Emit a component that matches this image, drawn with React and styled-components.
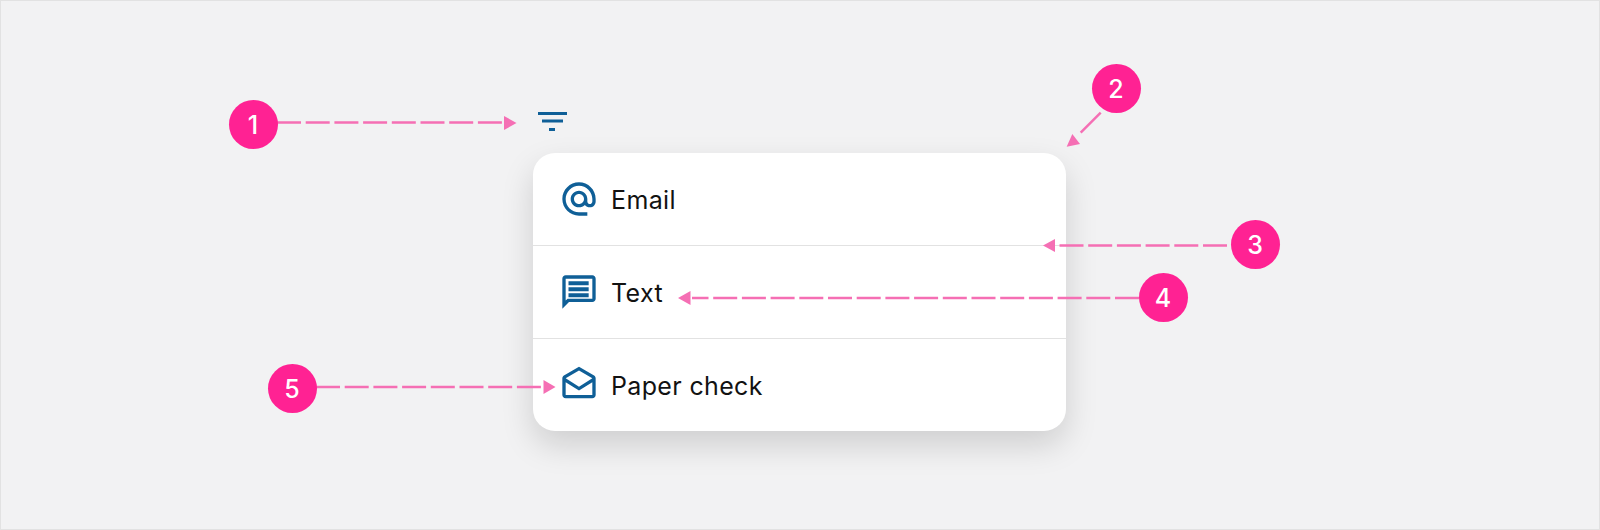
import React from "react"
import styled, { createGlobalStyle } from "styled-components"

const GlobalStyle = createGlobalStyle`
  html, body {
    margin: 0;
    padding: 0;
    background: #f2f2f3;
    font-family: "Inter", "Liberation Sans", sans-serif;
  }
`

const Stage = styled.div`
  position: relative;
  box-sizing: border-box;
  width: 1600px;
  height: 530px;
  padding: 109px 0 0 532px;
  background: #f2f2f3;
  border: 1px solid #e2e2e2;
  overflow: hidden;
`
const Column = styled.div`
  display: flex;
  flex-direction: column;
  align-items: flex-start;
  gap: 21px;
  width: 533px;
`
const FilterIcon = styled.svg`
  display: block;
  width: 32px;
  height: 22px;
  margin-left: 3px;
  color: #0f5f97;
`
const Card = styled.div`
  display: flex;
  flex-direction: column;
  align-self: stretch;
  background: #ffffff;
  border-radius: 22px;
  box-shadow: 0 14px 32px rgba(0, 0, 0, 0.15);
`
const Row = styled.div`
  box-sizing: border-box;
  display: flex;
  align-items: center;
  gap: 12px;
  height: 93px;
  padding-left: 26px;
  border-bottom: 1px solid #e2e2e2;
  &:last-child {
    height: 92px;
    border-bottom: 0;
  }
`
const Icon = styled.svg`
  flex-shrink: 0;
  width: 40px;
  height: 40px;
  fill: #0f5f97;
`
const Label = styled.span`
  padding-top: 2px;
  font-size: 25px;
  line-height: 32px;
  letter-spacing: 0.35px;
  color: #121212;
`
const Arrows = styled.svg`
  position: absolute;
  left: -1px;
  top: -1px;
  pointer-events: none;
`
const Badge = styled.div`
  position: absolute;
  box-sizing: border-box;
  left: ${props => props.x - 25.5}px;
  top: ${props => props.y - 25.5}px;
  width: 49px;
  height: 49px;
  padding-top: 1px;
  display: flex;
  align-items: center;
  justify-content: center;
  border-radius: 50%;
  background: #ff2293;
  color: #ffffff;
  font-size: 25px;
  font-weight: 500;
`

const arrowColor = "#f56fb4"

const lines = [
  { x1: 277, y1: 122.5, x2: 503, y2: 122.5, dash: "24 4.7" },
  { x1: 1227, y1: 245.5, x2: 1056, y2: 245.5, dash: "24 4.7" },
  { x1: 1139, y1: 298, x2: 692, y2: 298, dash: "24 4.7" },
  { x1: 316, y1: 387, x2: 542, y2: 387, dash: "24 4.7" },
  { x1: 1100.7, y1: 112.7, x2: 1080.7, y2: 132.7 },
]

const heads = [
  "504,116 504,130 516.5,123",
  "1055,239 1055,252 1043,245.5",
  "690.5,291 690.5,305 678,298",
  "543.5,380 543.5,394 555.5,387",
  "1066.7,146.7 1072.3,134 1080,144",
]

const badges = [
  { n: 1, x: 253, y: 124 },
  { n: 2, x: 1116, y: 88 },
  { n: 3, x: 1255, y: 244 },
  { n: 4, x: 1163, y: 297 },
  { n: 5, x: 292, y: 388 },
]

const App = () => (
  <Stage>
    <GlobalStyle />
    <Column>
      <FilterIcon viewBox="0 0 32 22" fill="currentColor">
        <rect x="2" y="2" width="29" height="3" />
        <rect x="6" y="9.5" width="21" height="3" />
        <rect x="13" y="18" width="6" height="3" />
      </FilterIcon>
      <Card>
        <Row>
          <Icon viewBox="0 0 24 24">
            <path d="M12 2C6.48 2 2 6.48 2 12s4.48 10 10 10h5v-2h-5c-4.34 0-8-3.66-8-8s3.66-8 8-8 8 3.66 8 8v1.43c0 .79-.71 1.57-1.5 1.57s-1.5-.78-1.5-1.57V12c0-2.76-2.24-5-5-5s-5 2.24-5 5 2.24 5 5 5c1.38 0 2.64-.56 3.54-1.47.65.89 1.77 1.47 2.96 1.47 1.97 0 3.5-1.6 3.5-3.57V12c0-5.52-4.48-10-10-10zm0 13c-1.66 0-3-1.34-3-3s1.34-3 3-3 3 1.34 3 3-1.34 3-3 3z" />
          </Icon>
          <Label>Email</Label>
        </Row>
        <Row>
          <Icon viewBox="0 0 24 24">
            <path d="M20 2H4c-1.1 0-2 .9-2 2v18l4-4h14c1.1 0 2-.9 2-2V4c0-1.1-.9-2-2-2zm0 14H5.17L4 17.17V4h16v12z" />
            <path d="M5.7 5.6h12.1V8H5.7zm0 3.6h12.1v2.4H5.7zm0 3.6h12.1v2.4H5.7z" />
          </Icon>
          <Label>Text</Label>
        </Row>
        <Row>
          <Icon viewBox="0 0 24 24">
            <path d="M21.99 8c0-.72-.37-1.35-.94-1.7L12 1 2.95 6.3C2.38 6.65 2 7.28 2 8v10c0 1.1.9 2 2 2h16c1.1 0 2-.9 2-2l-.01-10zM20 8v.01l-8 5-8-5L12 3.32 19.99 8zM4 18v-7.66l8 5.02 7.99-4.99L20 18H4z" />
          </Icon>
          <Label>Paper check</Label>
        </Row>
      </Card>
    </Column>
    <Arrows width="1600" height="530" viewBox="0 0 1600 530">
      {lines.map(({ dash, ...l }, i) => (
        <line key={i} {...l} stroke={arrowColor} strokeWidth="2.5" strokeDasharray={dash} />
      ))}
      {heads.map((points, i) => (
        <polygon key={i} points={points} fill={arrowColor} />
      ))}
    </Arrows>
    {badges.map(b => (
      <Badge key={b.n} x={b.x} y={b.y}>{b.n}</Badge>
    ))}
  </Stage>
)

export default App
